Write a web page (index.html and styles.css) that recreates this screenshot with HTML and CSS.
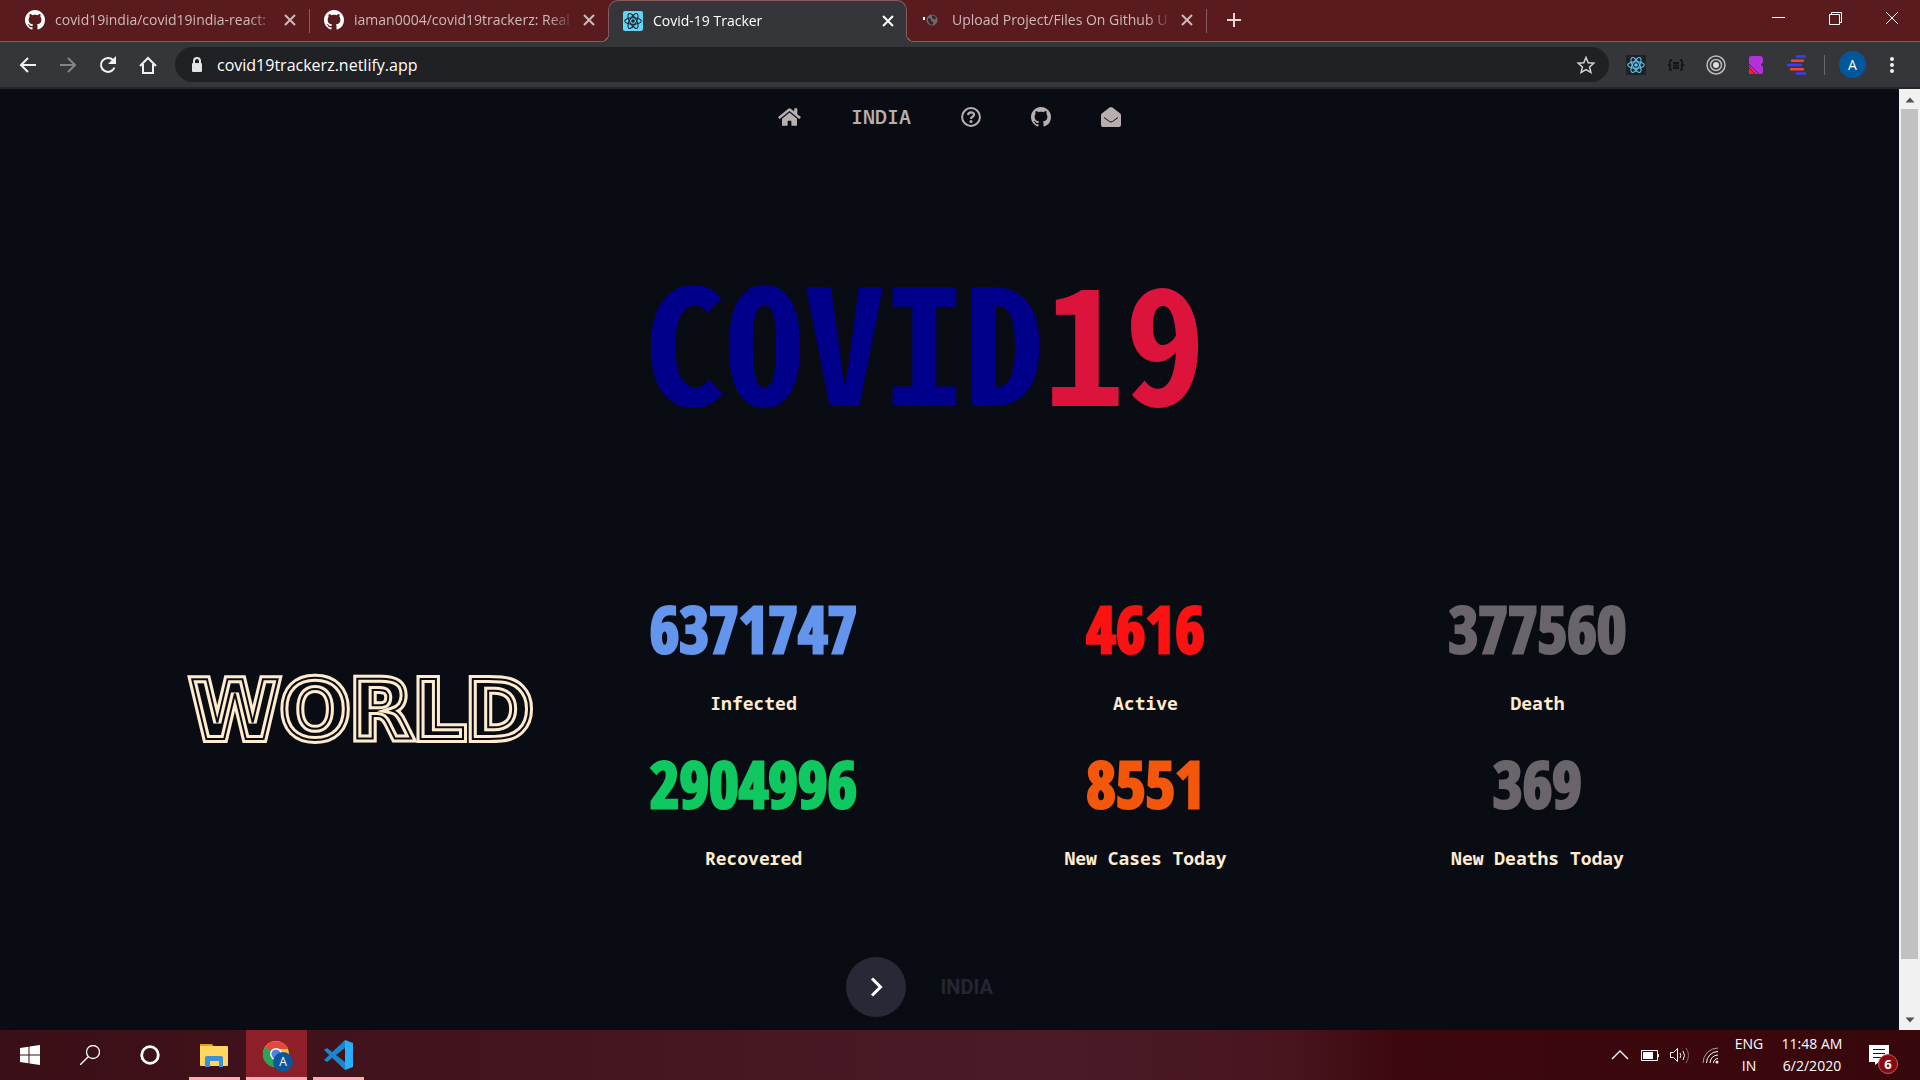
FILE: index.html
```html
<!DOCTYPE html>
<html lang="en">
<head>
<meta charset="utf-8">
<title>Covid-19 Tracker</title>
<link rel="stylesheet" href="styles.css">
</head>
<body>
<svg class="defs" aria-hidden="true">
  <symbol id="github" viewBox="0 0 16 16"><path fill="currentColor" d="M8 0C3.58 0 0 3.58 0 8c0 3.54 2.29 6.53 5.47 7.59.4.07.55-.17.55-.38 0-.19-.01-.82-.01-1.49-2.01.37-2.53-.49-2.69-.94-.09-.23-.48-.94-.82-1.13-.28-.15-.68-.52-.01-.53.63-.01 1.08.58 1.23.82.72 1.21 1.87.87 2.33.66.07-.52.28-.87.51-1.07-1.78-.2-3.64-.89-3.64-3.95 0-.87.31-1.59.82-2.15-.08-.2-.36-1.02.08-2.12 0 0 .67-.21 2.2.82.64-.18 1.32-.27 2-.27.68 0 1.36.09 2 .27 1.53-1.04 2.2-.82 2.2-.82.44 1.1.16 1.92.08 2.12.51.56.82 1.27.82 2.15 0 3.07-1.87 3.75-3.65 3.95.29.25.54.73.54 1.48 0 1.07-.01 1.93-.01 2.2 0 .21.15.46.55.38A8.013 8.013 0 0016 8c0-4.42-3.58-8-8-8z"/></symbol>
  <symbol id="close" viewBox="0 0 20 20"><path d="M5 5l10 10M15 5L5 15" stroke="currentColor" stroke-width="2" fill="none"/></symbol>
  <symbol id="react" viewBox="-12 -12 24 24"><circle r="2.2" fill="currentColor"/><g fill="none" stroke="currentColor" stroke-width="1.3"><ellipse rx="10" ry="4"/><ellipse rx="10" ry="4" transform="rotate(60)"/><ellipse rx="10" ry="4" transform="rotate(120)"/></g></symbol>
</svg>

<header class="browser">
  <div class="tabstrip">
    <div class="tab">
      <svg class="favicon"><use href="#github"/></svg>
      <span class="tab-title">covid19india/covid19india-react:</span>
      <button class="close" aria-label="Close tab"><svg><use href="#close"/></svg></button>
    </div>
    <div class="tab divided">
      <svg class="favicon"><use href="#github"/></svg>
      <span class="tab-title">iaman0004/covid19trackerz: Real</span>
      <button class="close" aria-label="Close tab"><svg><use href="#close"/></svg></button>
    </div>
    <div class="tab active">
      <svg class="favicon tile"><use href="#react"/></svg>
      <span class="tab-title">Covid-19 Tracker</span>
      <button class="close" aria-label="Close tab"><svg><use href="#close"/></svg></button>
    </div>
    <div class="tab">
      <svg class="favicon" viewBox="0 0 20 20"><rect x="1" y="7" width="2" height="3" fill="#fff"/><circle cx="10" cy="10" r="5.500" fill="#6b6d70"/><path d="M6 8q3 0 3 2t3 2l-2 3q-3-1-4-4zM10 5l4 2-1 3-3-2z" fill="#3f2528"/></svg>
      <span class="tab-title">Upload Project/Files On Github U</span>
      <button class="close" aria-label="Close tab"><svg><use href="#close"/></svg></button>
    </div>
    <div class="new-tab divided"><button aria-label="New tab"><svg viewBox="0 0 20 20"><path d="M10 3v14M3 10h14" stroke="currentColor" stroke-width="2"/></svg></button></div>
    <div class="window-buttons">
      <button aria-label="Minimize"><svg viewBox="0 0 20 20"><path d="M4 9.500h13" stroke="#fff"/></svg></button>
      <button aria-label="Restore"><svg viewBox="0 0 20 20"><path d="M4.500 6.500h10v10h-10zM6.500 6v-1.500h10v10h-2" stroke="#fff" fill="none"/></svg></button>
      <button aria-label="Close"><svg viewBox="0 0 20 20"><path d="M4 4l12 12M16 4L4 16" stroke="#fff"/></svg></button>
    </div>
  </div>

  <div class="toolbar">
    <div class="history">
      <button aria-label="Back"><svg viewBox="0 0 20 20"><path d="M18 10H3M10 3l-7 7 7 7" stroke="#f1f1f1" stroke-width="2" fill="none"/></svg></button>
      <button aria-label="Forward"><svg viewBox="0 0 20 20"><path d="M2 10h15M10 3l7 7-7 7" stroke="#838588" stroke-width="2" fill="none"/></svg></button>
      <button aria-label="Reload"><svg viewBox="0 0 20 20"><path d="M16.500 12.500A7 7 0 1 1 15 5" stroke="#f1f1f1" stroke-width="2" fill="none"/><path d="M18 1v8h-8z" fill="#f1f1f1"/></svg></button>
      <button aria-label="Home"><svg viewBox="0 0 20 20"><path d="M2 11l8-8 8 8M5 9v9h10V9" stroke="#f1f1f1" stroke-width="2" fill="none"/></svg></button>
    </div>
    <div class="address">
      <svg class="lock" viewBox="0 0 20 20"><rect x="5" y="8" width="10" height="9" rx="1" fill="#e4e4e4"/><path d="M7 8V6a3 3 0 0 1 6 0v2" stroke="#e4e4e4" stroke-width="2" fill="none"/></svg>
      <input type="text" aria-label="Address" value="covid19trackerz.netlify.app">
      <button aria-label="Bookmark"><svg viewBox="0 0 20 20"><path d="M10 2.500l2.200 5.200 5.600.5-4.200 3.700 1.300 5.500-4.900-2.900-4.900 2.900 1.300-5.500L2.200 8.200l5.600-.5z" stroke="#d2d2d2" stroke-width="1.500" fill="none"/></svg></button>
    </div>
    <div class="extensions">
      <button aria-label="React tools"><svg class="dark-tile"><use href="#react"/></svg></button>
      <button aria-label="JSON viewer"><svg viewBox="0 0 20 20"><g stroke="#151617" stroke-width="1.800" fill="none"><path d="M6 5Q3 5 4 8t-2 2q3 0 2 2.500T6 15M14 5q3 0 2 3t2 2q-3 0-2 2.500T14 15M7 8h6M7 10.500h6M7 13h6"/></g></svg></button>
      <button aria-label="Rings"><svg viewBox="0 0 20 20"><circle cx="10" cy="10" r="3" fill="#ddd"/><circle cx="10" cy="10" r="5.500" stroke="#bbb" stroke-width="1.500" fill="none"/><circle cx="10" cy="10" r="9" stroke="#bbb" stroke-width="1.500" fill="none"/></svg></button>
      <button aria-label="Ribbon"><svg viewBox="0 0 20 20"><path d="M3 3q0-2 2-2h9q3 0 3 3v3l-2 3 2 2v5q0 2-3 2H9L3 10z" fill="#b431d8"/><path d="M3 11l8 8H3z" fill="#ff1c35"/><path d="M3 9l10 10M3 13l6 6" stroke="#46304c"/></svg></button>
      <button aria-label="Lines"><svg viewBox="0 0 20 20"><g stroke-width="2.400" stroke-linecap="round"><path d="M11 1.500h8M2 10h13M11 18.500h8" stroke="#3c3cff"/><path d="M6 5.800h11M5 14.200h12" stroke="#ff3c3c"/></g></svg></button>
    </div>
    <button class="avatar" aria-label="Profile">A</button>
    <button class="menu" aria-label="Menu"><svg viewBox="0 0 20 20"><g fill="#f1f1f1"><circle cx="10" cy="4" r="2"/><circle cx="10" cy="10" r="2"/><circle cx="10" cy="16" r="2"/></g></svg></button>
  </div>
</header>

<div class="viewport">
  <main class="page">
    <nav class="nav">
      <a href="#home" aria-label="Home"><svg class="home" viewBox="0 0 576 512"><path fill="currentColor" d="M280.37 148.26L96 300.11V464a16 16 0 0 0 16 16l112.060-.29a16 16 0 0 0 15.920-16V368a16 16 0 0 1 16-16h64a16 16 0 0 1 16 16v95.640a16 16 0 0 0 16 16.050L464 480a16 16 0 0 0 16-16V300L295.670 148.260a12.190 12.190 0 0 0-15.300 0zM571.600 251.470L488 182.560V44.050a12 12 0 0 0-12-12h-56a12 12 0 0 0-12 12v72.610L318.470 43a48 48 0 0 0-61 0L4.340 251.470a12 12 0 0 0-1.600 16.900l25.500 31A12 12 0 0 0 45.150 301l235.220-193.740a12.190 12.190 0 0 1 15.300 0L530.900 301a12 12 0 0 0 16.900-1.600l25.500-31a12 12 0 0 0-1.700-16.930z"/></svg></a>
      <a href="#india">INDIA</a>
      <a href="#about" aria-label="About"><svg viewBox="0 0 20 20"><circle cx="10" cy="10" r="8.900" stroke="currentColor" stroke-width="2" fill="none"/><path d="M7 8q.3-2.600 3-2.600 3 0 3 2.400 0 1.200-1.500 2T10 12" stroke="currentColor" stroke-width="2.200" fill="none"/><circle cx="10" cy="14.500" r="1.500" fill="currentColor"/></svg></a>
      <a href="#github-page" aria-label="GitHub"><svg><use href="#github"/></svg></a>
      <a href="#mail" aria-label="Mail"><svg viewBox="0 0 20 20"><path fill="currentColor" d="M0 8q0-1 .8-1.600L8.500.6q1.500-1.100 3 0l7.700 5.800Q20 7 20 8v10q0 2-2 2H2q-2 0-2-2z"/><path d="M3 10.500l5.500 4q1.500 1.100 3 0l5.500-4" stroke="#0a0c14" fill="none"/></svg></a>
    </nav>

    <h1 class="title"><span class="covid">COVID</span><span class="nineteen">19</span></h1>

    <section class="stats">
      <h2 class="world"><span data-text="WORLD">WORLD</span></h2>
      <div class="stat"><b class="blue">6371747</b><span>Infected</span></div>
      <div class="stat"><b class="red">4616</b><span>Active</span></div>
      <div class="stat"><b class="gray">377560</b><span>Death</span></div>
      <div class="stat"><b class="green">2904996</b><span>Recovered</span></div>
      <div class="stat"><b class="orange">8551</b><span>New Cases Today</span></div>
      <div class="stat"><b class="gray">369</b><span>New Deaths Today</span></div>
    </section>

    <button class="india"><span class="circle"><svg viewBox="0 0 20 20"><path d="M6 1.500l8.500 8.500L6 18.500" stroke="#fff" stroke-width="3" fill="none"/></svg></span><span>INDIA</span></button>
  </main>
  <div class="scrollbar">
    <svg viewBox="0 0 20 20"><path d="M5.500 13.500h9L10 8.500z" fill="#505050"/></svg>
    <div class="thumb"></div>
    <svg viewBox="0 0 20 20"><path d="M5.500 7.500h9L10 12.500z" fill="#505050"/></svg>
  </div>
</div>

<footer class="taskbar">
  <div class="system">
    <button aria-label="Start"><svg viewBox="0 0 20 20"><path fill="#fff" d="M0 3l8.500-1.200v7.700H0zM9.500 1.600L20 0v9.500H9.500zM0 10.500h8.500v7.700L0 17zM9.500 10.500H20V20L9.500 18.400z"/></svg></button>
    <button aria-label="Search"><svg viewBox="0 0 20 20"><circle cx="13" cy="7" r="6.500" stroke="#fff" stroke-width="1.300" fill="none"/><path d="M8.500 11.500L0 20" stroke="#fff" stroke-width="1.300"/></svg></button>
    <button aria-label="Cortana"><svg viewBox="0 0 20 20"><circle cx="10" cy="10" r="8.300" stroke="#fff" stroke-width="2.800" fill="none"/></svg></button>
  </div>
  <div class="apps">
    <button class="app" aria-label="File Explorer"><svg viewBox="0 0 30 30"><path d="M0 4h12l2 3H0z" fill="#e5a00d"/><rect x="0" y="6" width="28" height="20" rx="1" fill="#ffd75e"/><path d="M5 27V18q0-2 2-2h14q2 0 2 2v9h-4v-6h-9v6z" fill="#3f8fd6"/></svg></button>
    <button class="app current" aria-label="Chrome"><svg viewBox="0 0 30 30"><circle cx="14" cy="14" r="13" fill="#f7c331"/><path d="M14 14L3 7.500A13 13 0 0 1 26 9H14z" fill="#e0493d"/><path d="M14 14l-2 13A13 13 0 0 1 3 7z" fill="#2aa557"/><circle cx="14" cy="14" r="6" fill="#fff"/><circle cx="14" cy="14" r="4.600" fill="#4c82ec"/></svg><span>A</span></button>
    <button class="app" aria-label="Visual Studio Code"><svg viewBox="0 0 30 30"><path d="M0 10l3-2 18 14v8z" fill="#1a86d0"/><path d="M0 20l3 2L21 8V0z" fill="#1a86d0"/><path d="M21 0l8 3v24l-8 3z" fill="#2aacf6"/></svg></button>
  </div>
  <div class="tray">
    <button aria-label="Show hidden icons"><svg viewBox="0 0 20 20"><path d="M2 14l8-8 8 8" stroke="#fff" stroke-width="1.400" fill="none"/></svg></button>
    <svg viewBox="0 0 20 20"><path d="M1.500 5.500h16v10h-16zM18.500 9v3" stroke="#fff" fill="none"/><rect x="3" y="7" width="10" height="7" fill="#fff"/></svg>
    <svg viewBox="0 0 20 20"><path d="M.5 7.500h3l4-4v13l-4-4h-3zM10 8q1.500 2.500 0 5M13 6q3 4.500 0 9" stroke="#fff" fill="none"/><path d="M16 3q5 7 0 15" stroke="#936568" fill="none"/></svg>
    <svg viewBox="0 0 20 20"><g fill="none"><path d="M3 18A15 15 0 0 1 18 3" stroke="#b99a9c"/><path d="M6.500 18A11.500 11.500 0 0 1 18 6.500M10 18a8 8 0 0 1 8-8M13.500 18a4.500 4.500 0 0 1 4.500-4.500" stroke="#fff"/></g><circle cx="17" cy="17" r="1.500" fill="#fff"/></svg>
    <div class="lines lang"><span>ENG</span><span>IN</span></div>
    <div class="lines clock"><span>11:48 AM</span><span>6/2/2020</span></div>
    <button class="notify" aria-label="Notifications"><svg viewBox="0 0 20 20"><path d="M0 0h20v17H10l-4 3v-3H0z" fill="#fff"/><path d="M4 4.500h12M4 8.500h12M4 12.500h12" stroke="#3a070c"/></svg><span>6</span></button>
  </div>
</footer>
</body>
</html>
```
FILE: styles.css
```css
* { box-sizing: border-box; }
body {
  margin: 0;
  min-height: 100vh;
  display: flex;
  flex-direction: column;
  background: #0a0c14;
  font-family: "Open Sans", sans-serif;
}
.defs { display: none; }
button {
  display: flex;
  align-items: center;
  justify-content: center;
  padding: 0;
  border: 0;
  background: none;
  color: inherit;
  font: inherit;
}
svg { width: 20px; height: 20px; flex: none; }

/* browser frame */
.tabstrip {
  display: flex;
  height: 42px;
  padding-left: 10px;
  background: #591b1d;
  box-shadow: inset 0 -1px #8a5a5c;
  color: #cdbabb;
}
.tab {
  display: flex;
  align-items: center;
  gap: 10px;
  width: 299px;
  height: 42px;
  padding: 0 9px 2px 15px;
  font-size: 14px;
}
.favicon { color: #fff; }
.tile { background: #5fd6f8; color: #20242a; border-radius: 2px; }
.tab-title {
  flex: 1;
  min-width: 0;
  margin-right: -6px;
  overflow: hidden;
  white-space: nowrap;
  line-height: 24px;
  -webkit-mask-image: linear-gradient(to right, #000 88%, transparent);
  mask-image: linear-gradient(to right, #000 88%, transparent);
}
.divided {
  background: linear-gradient(#8a5a5c, #8a5a5c) 0 9px / 1px 24px no-repeat;
}
.active {
  position: relative;
  background: #35363a;
  border: 1px solid #8a5a5c;
  border-bottom: 0;
  border-radius: 10px 10px 0 0;
  padding: 0 8px 2px 14px;
  color: #fff;
}
/* curved feet where the tab meets the toolbar */
.active::before,
.active::after {
  content: "";
  position: absolute;
  bottom: 0;
  width: 8px;
  height: 8px;
}
.active::before {
  left: -8px;
  background: radial-gradient(circle at 0 0, #591b1d 7px, #8a5a5c 7px, #8a5a5c 8px, #35363a 8px);
}
.active::after {
  right: -8px;
  background: radial-gradient(circle at 100% 0, #591b1d 7px, #8a5a5c 7px, #8a5a5c 8px, #35363a 8px);
}
.new-tab { display: flex; width: 56px; padding-bottom: 2px; justify-content: center; color: #e2d8d8; }
.window-buttons { display: flex; margin-left: auto; padding-bottom: 6px; }
.window-buttons button { width: 57px; }
.toolbar {
  display: flex;
  align-items: center;
  height: 47px;
  padding: 0 26px 0 8px;
  background: #35363a;
  border-bottom: 2px solid #252628;
}
.history { display: flex; width: 167px; }
.history button { width: 40px; height: 36px; }
.address {
  display: flex;
  flex: 1;
  align-items: center;
  height: 35px;
  padding: 0 13px 0 12px;
  border-radius: 18px;
  background: #202124;
}
.address input {
  flex: 1;
  min-width: 0;
  margin-left: 10px;
  padding: 0;
  border: 0;
  background: none;
  color: #fff;
  font: 16px "Open Sans", sans-serif;
}
.extensions {
  display: flex;
  width: 216px;
  padding-left: 7px;
  background: linear-gradient(#66686b, #66686b) 100% 50% / 1px 20px no-repeat;
}
.extensions button { width: 40px; height: 24px; }
.dark-tile { background: #202124; color: #5bc6ee; }
.avatar {
  width: 27px;
  height: 27px;
  margin: 0 16px 0 14px;
  border-radius: 50%;
  background: #00579b;
  color: #fff;
  font-size: 14px;
}
.menu { width: 20px; margin-right: -8px; }

/* web page */
.viewport { display: flex; flex: 1; }
.page {
  display: flex;
  flex: 1;
  flex-direction: column;
  align-items: center;
  padding-bottom: 13px;
}
.nav {
  display: flex;
  align-items: center;
  justify-content: center;
  gap: 50px;
  height: 56px;
}
.nav a {
  display: flex;
  color: #b7afaf;
  font: 600 20px/24px "Noto Sans Mono", monospace;
  text-decoration: none;
}
.nav .home { width: 23px; }
.title {
  margin: 111px 50px 0 0;
  font: 700 160px/160px "Noto Sans Mono CJK JP", monospace;
  color: #00008b;
}
.nineteen { color: #dc143c; }
.stats {
  display: grid;
  grid-template-columns: repeat(4, 392px);
  row-gap: 36px;
  margin-top: 180px;
}
.world {
  grid-row: span 2;
  display: flex;
  align-items: center;
  justify-content: center;
  margin: 0;
  padding-bottom: 44px;
  font: 700 82px/84px "DejaVu Sans", sans-serif;
  color: #0a0c14;
}
/* parallel outlines: a thin dark stroke splits the wide light one in two */
.world span {
  position: relative;
  -webkit-text-stroke: 8px #ffebcd;
}
.world span::before {
  content: attr(data-text);
  position: absolute;
  inset: 0;
  color: transparent;
  -webkit-text-stroke: 2px #0a0c14;
}
.stat { display: flex; flex-direction: column; align-items: center; gap: 31px; }
.stat b {
  font: 700 64px/66px "Open Sans Condensed", "Open Sans", sans-serif;
  -webkit-text-stroke: 3px currentColor;
  margin-bottom: -2px;
}
.stat span {
  color: #ffebcd;
  font: 700 18px/24px "Noto Sans Mono", monospace;
}
.blue { color: #6495ed; }
.red { color: #fb1212; }
.gray { color: #69656b; }
.green { color: #10c860; }
.orange { color: #f2570c; }
.india {
  width: 208px;
  margin-top: 87px;
  justify-content: flex-start;
  gap: 35px;
  color: #242632;
  font: 700 20px/24px Roboto, sans-serif;
}
.circle {
  display: flex;
  align-items: center;
  justify-content: center;
  width: 60px;
  height: 60px;
  border-radius: 50%;
  background: #282936;
}
.scrollbar {
  display: flex;
  flex-direction: column;
  align-items: center;
  width: 21px;
  background: #f1f1f1;
}
.thumb { flex: 1; width: 17px; margin-bottom: 51px; background: #c1c1c1; }

/* taskbar */
.taskbar {
  display: flex;
  height: 50px;
  background: linear-gradient(to right, #3b0f17, #45151f 30%, #4b1a27 55%, #48151f 67%, #3c080d 73%, #38070c);
  color: #fff;
}
.system { display: flex; width: 184px; }
.system button { width: 60px; }
.apps { display: flex; gap: 1px; }
.app { position: relative; width: 61px; background: linear-gradient(#ffadb5, #ffadb5) 50% 100% / 51px 3px no-repeat; }
.app svg { width: 30px; height: 30px; }
.current { background: linear-gradient(#ffadb5, #ffadb5) 0 100% / 100% 3px no-repeat #8c1f28; }
.current span {
  position: absolute;
  left: 27px;
  top: 22px;
  width: 20px;
  border-radius: 50%;
  background: #0c5699;
  font-size: 12px;
  line-height: 20px;
}
.tray { display: flex; align-items: center; gap: 10px; margin-left: auto; padding-right: 31px; }
.lines { display: flex; flex-direction: column; align-items: center; font-size: 14px; line-height: 22px; }
.lang { width: 38px; }
.clock { width: 68px; }
.notify { position: relative; margin-left: 13px; }
.notify span {
  position: absolute;
  left: 9px;
  top: 9px;
  width: 20px;
  border: 1px solid #b06065;
  border-radius: 50%;
  background: #8b0a12;
  font-size: 13px;
  font-weight: 700;
  line-height: 18px;
}
```
